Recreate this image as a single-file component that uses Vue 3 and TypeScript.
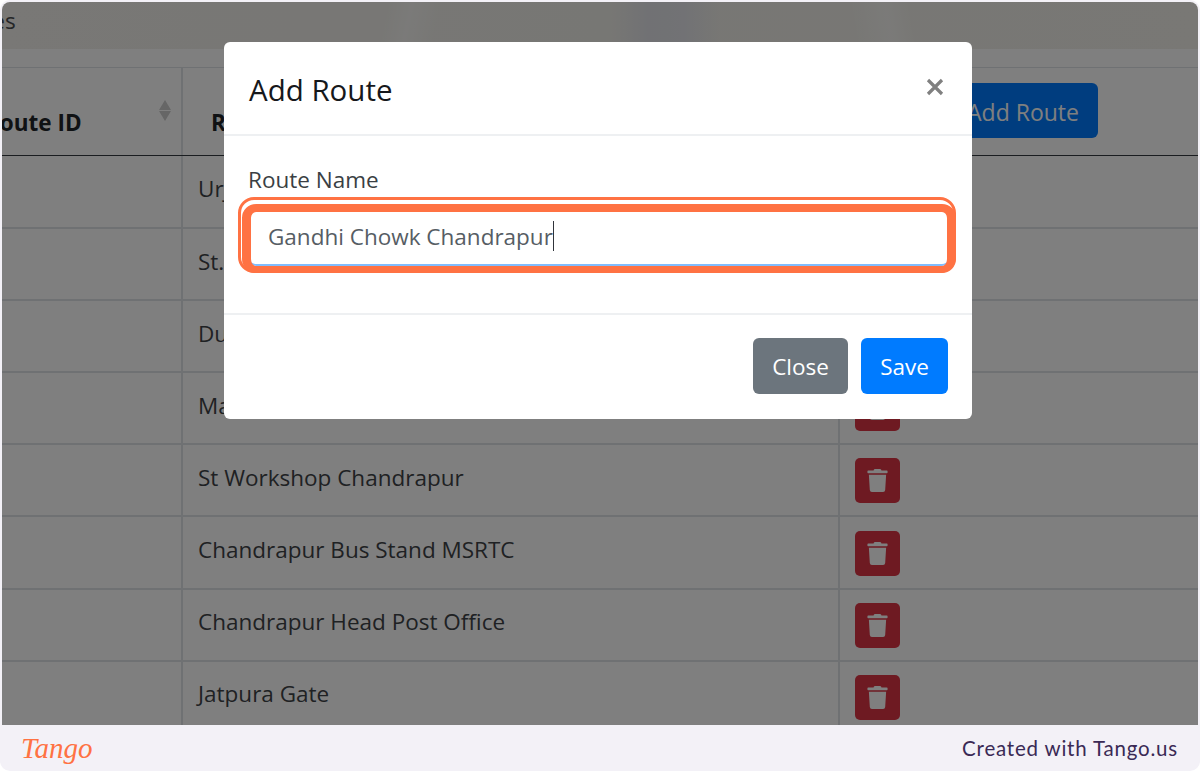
<template>
  <div class="page">
    <div class="shot">
      <div class="banner"><span class="banner-title">Routes</span></div>
      <div class="table">
        <div class="row head">
          <div class="cell c1">
            <span class="id-label">Route ID</span>
            <span class="sort"><i class="up"></i><i class="down"></i></span>
          </div>
          <div class="cell c2"><b>Route Name</b></div>
          <div class="cell c3 head-action"><button class="add-btn">Add Route</button></div>
        </div>
        <div v-for="r in routes" :key="r" class="row">
          <div class="cell c1"></div>
          <div class="cell c2"><span class="name">{{ r }}</span></div>
          <div class="cell c3">
            <button class="del-btn" aria-label="Delete">
              <svg viewBox="0 0 448 512" width="21" height="23"><path d="M432 32H312l-9.4-18.7A24 24 0 0 0 281.1 0H166.8a23.72 23.72 0 0 0-21.4 13.3L136 32H16A16 16 0 0 0 0 48v32a16 16 0 0 0 16 16h416a16 16 0 0 0 16-16V48a16 16 0 0 0-16-16zM53.2 467a48 48 0 0 0 47.9 45h245.8a48 48 0 0 0 47.9-45L416 128H32z"/></svg>
            </button>
          </div>
        </div>
      </div>
      <div class="backdrop">
        <div class="modal">
          <div class="modal-head">
            <h5>Add Route</h5>
            <span class="close-x">
              <svg viewBox="0 0 18 18" width="18" height="18"><path d="M2 2l14 14M16 2L2 16" /></svg>
            </span>
          </div>
          <div class="modal-body">
            <label>Route Name</label>
            <div class="field">
              <div class="input">{{ value }}<span class="caret"></span></div>
              <span class="ring-outer"></span>
              <span class="ring"></span>
            </div>
          </div>
          <div class="modal-foot">
            <button class="btn grey">Close</button>
            <button class="btn blue">Save</button>
          </div>
        </div>
      </div>
    </div>
    <div class="footer">
      <span class="logo">Tango</span>
      <span class="credit">Created with Tango.us</span>
    </div>
  </div>
</template>

<script setup lang="ts">
const value = 'Gandhi Chowk Chandrapur'
const routes: string[] = [
  'Urja Nagar',
  'St. Michael School',
  'Durgapur',
  'Mahakali Mandir',
  'St Workshop Chandrapur',
  'Chandrapur Bus Stand MSRTC',
  'Chandrapur Head Post Office',
  'Jatpura Gate',
]
</script>

<style>
html, body { margin: 0; background: #fff; }
</style>

<style scoped>
.page {
  width: 1200px;
  height: 771px;
  display: flex;
  flex-direction: column;
  background: #f3f1f7;
  border-radius: 10px;
  font-family: "Open Sans", "Liberation Sans", sans-serif;
  overflow: hidden;
}
.shot {
  position: relative;
  flex: 1;
  margin: 2px 2px 0;
  border-radius: 8px 8px 0 0;
  overflow: hidden;
  background: #fff;
  min-height: 0;
}
.banner {
  height: 47px;
  display: flex;
  align-items: center;
  background:
    linear-gradient(102deg, transparent 32%, rgba(255,255,255,.4) 34%, transparent 36.5%),
    linear-gradient(90deg, transparent 51%, #e2e3e8 54%, #e4e5ea 57%, transparent 60%),
    linear-gradient(80deg, transparent 71%, rgba(255,255,255,.4) 74%, transparent 76%),
    linear-gradient(90deg, #f2f0ec, #efeee9 50%, #f2f0ea);
}
.banner-title {
  margin-left: -59px;
  padding-bottom: 10px;
  font-size: 22.5px;
  color: #4a4d50;
}
.table {
  padding-top: 18px;
  font-size: 22.5px;
  color: #3f4347;
}
.row {
  display: flex;
  height: 72.1px;
  box-sizing: border-box;
  border-bottom: 2px solid #dee2e6;
}
.row.head {
  height: 89px;
  border-top: 1px solid #dee2e6;
  border-bottom: 1px solid #343a40;
  color: #212529;
}
.row.head + .row { height: 73.1px; }
.cell {
  display: flex;
  align-items: center;
  box-sizing: border-box;
}
.c1 {
  width: 181px;
  flex: none;
  position: relative;
  border-right: 2px solid #dee2e6;
}
.c2 {
  width: 657px;
  flex: none;
  padding-left: 15px;
  border-right: 2px solid #dee2e6;
}
.name { padding-bottom: 6px; }
.c3 { flex: 1; padding-left: 15px; }
.head .c2 { padding-left: 28px; }
.head .c2 b { padding-top: 22px; font-weight: 700; }
.id-label {
  margin-left: -17px;
  padding-top: 22px;
  font-weight: 700;
  white-space: nowrap;
}
.sort {
  position: absolute;
  right: 10px;
  top: 32px;
  display: flex;
  flex-direction: column;
  gap: 1px;
}
.sort i {
  display: block;
  width: 0;
  height: 0;
  border-left: 6px solid transparent;
  border-right: 6px solid transparent;
}
.sort .up { border-bottom: 10px solid #ccc; }
.sort .down { border-top: 10px solid #ccc; }
.head-action { padding-left: 110px; }
.add-btn {
  width: 148px;
  height: 55px;
  margin-bottom: 2px;
  border: none;
  border-radius: 6px;
  background: #007bff;
  color: #fff;
  font: 23px "Open Sans", "Liberation Sans", sans-serif;
  padding: 3px 2px 0 0;
}
.del-btn {
  width: 45px;
  height: 45px;
  margin-top: 1px;
  border: none;
  border-radius: 5px;
  background: #dc3545;
  padding: 0;
  display: flex;
  align-items: center;
  justify-content: center;
}
.del-btn svg { fill: #fff; }
.backdrop {
  position: absolute;
  inset: 0;
  background: rgba(0, 0, 0, .5);
  padding: 40px 0 0 222px;
}
.modal {
  width: 748px;
  height: 377px;
  background: #fff;
  border-radius: 6px;
  display: flex;
  flex-direction: column;
  color: #212529;
}
.modal-head {
  height: 94px;
  box-sizing: border-box;
  flex: none;
  display: flex;
  align-items: center;
  justify-content: space-between;
  padding: 0 28px 0 25px;
  border-bottom: 2px solid #eef0f2;
}
.modal-head h5 {
  margin: 0;
  padding-top: 2px;
  font-size: 29.5px;
  font-weight: 400;
  color: #16181b;
}
.close-x { display: flex; margin-top: -2px; }
.close-x svg { fill: none; stroke: #808080; stroke-width: 3.2; }
.modal-body {
  flex: 1;
  padding: 29px 25px 0 24px;
  display: flex;
  flex-direction: column;
  font-size: 22.5px;
}
.modal-body label { line-height: 30px; color: #3a3f44; }
.field { position: relative; margin-top: 17px; margin-left: 3px; }
.input {
  height: 54px;
  box-sizing: border-box;
  padding: 0 0 4px 17px;
  display: flex;
  align-items: center;
  border-bottom: 2px solid #80bdff;
  border-radius: 5px;
  color: #565d64;
  white-space: nowrap;
}
.caret {
  display: block;
  width: 1.5px;
  height: 30px;
  background: #30343a;
}
.ring {
  position: absolute;
  left: -9px;
  right: -9px;
  top: -8px;
  bottom: -7px;
  border: solid #ff7243;
  border-width: 8px 9px 7px;
  border-radius: 14px;
  pointer-events: none;
}
.ring-outer {
  position: absolute;
  left: -13px;
  right: -9px;
  top: -15px;
  bottom: -7px;
  border: 3px solid #ff7243;
  border-radius: 16px;
  pointer-events: none;
}
.modal-foot {
  height: 106px;
  flex: none;
  box-sizing: border-box;
  border-top: 2px solid #eef0f2;
  display: flex;
  justify-content: flex-end;
  gap: 13px;
  padding: 23px 24px 0 0;
}
.btn {
  height: 56px;
  border: none;
  border-radius: 6px;
  color: #fff;
  font: 22.5px "Open Sans", "Liberation Sans", sans-serif;
  padding: 0;
}
.grey { width: 95px; background: #6c757d; }
.blue { width: 87px; background: #007bff; }
.footer {
  height: 46px;
  flex: none;
  display: flex;
  align-items: center;
  justify-content: space-between;
  padding: 0 22px 0 21px;
}
.logo {
  font: italic 400 29px "Liberation Serif", serif;
  color: #ff7243;
}
.credit {
  font: 400 20.5px Lato, "Open Sans", sans-serif;
  letter-spacing: 0.8px;
  color: #3a2a55;
}
</style>
